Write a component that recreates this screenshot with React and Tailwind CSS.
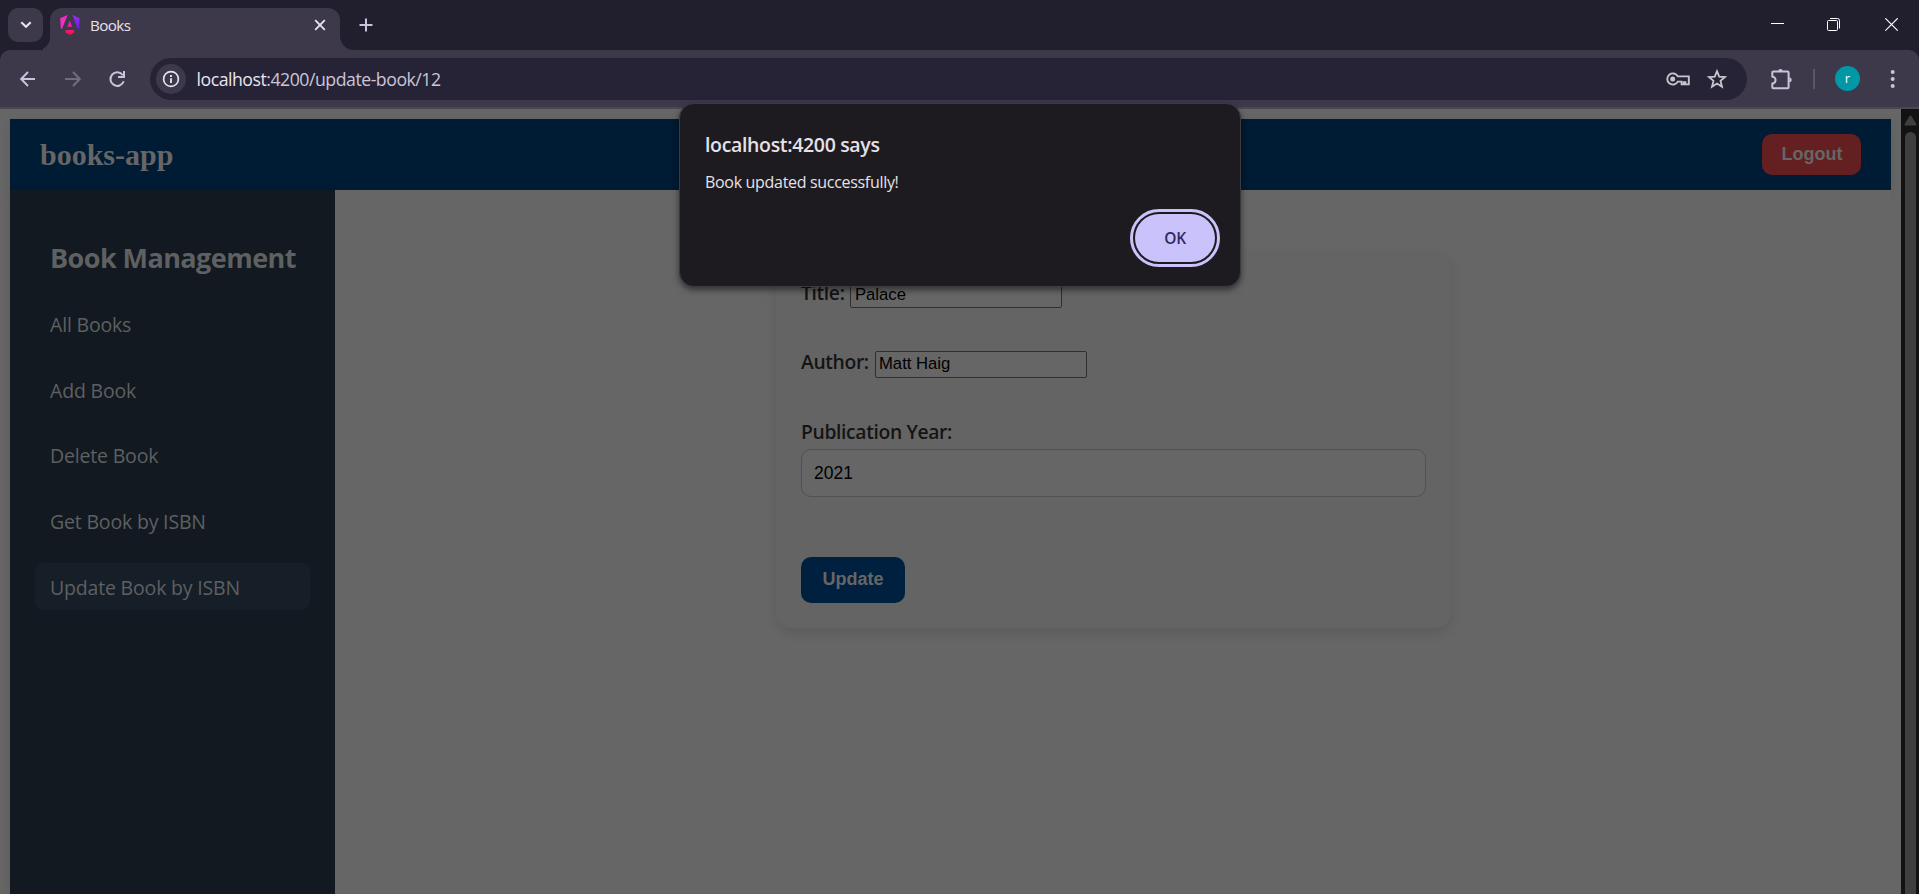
const NAV = ["All Books", "Add Book", "Delete Book", "Get Book by ISBN", "Update Book by ISBN"];
const ACTIVE = "Update Book by ISBN";

function AngularLogo() {
  return (
    <svg width="20" height="20" viewBox="0 0 20 20" className="shrink-0">
      <defs>
        <linearGradient id="left" x1="0" y1="0" x2="1" y2="1"><stop offset="0" stopColor="#f62ae0" /><stop offset="1" stopColor="#f0309a" /></linearGradient>
        <linearGradient id="right" x1="0" y1="0" x2="0" y2="1"><stop offset="0" stopColor="#9a2bf5" /><stop offset="1" stopColor="#6a1bf0" /></linearGradient>
        <linearGradient id="foot" x1="0" y1="0" x2="0" y2="1"><stop offset="0" stopColor="#f01a78" /><stop offset="1" stopColor="#ff0a3c" /></linearGradient>
      </defs>
      <path d="M0.2 3.2 7.6 0.1 2.3 13.3 0.9 13.9Z" fill="url(#left)" />
      <path d="M19.6 3.2 12.4 0.1 17.6 13.3 19 13.9Z" fill="url(#right)" />
      <path d="M9.8 5.6 12.2 11.8H7.3Z" fill="#e81fb0" />
      <path d="M6 15H13.8L14.6 17.2 9.9 20 5.1 17.2Z" fill="url(#foot)" />
    </svg>
  );
}

function TabStrip() {
  return (
    <div className="flex h-[50px] bg-[#211e2e]">
      <button className="ml-2 mt-2 flex h-[34px] w-[35px] items-center justify-center rounded-[10px] bg-[#3d394b]">
        <svg width="12" height="8" viewBox="0 0 12 8" fill="none" stroke="#e4e1f2" strokeWidth="2.2"><path d="M1.3 1.2 6 5.8 10.7 1.2" /></svg>
      </button>
      <div className="flex w-[7px] items-end">
        <svg width="7" height="14" viewBox="0 0 7 14"><path d="M7 0A13 13 0 0 1 0 12.5V14H7Z" fill="#3d394b" /></svg>
      </div>
      <div className="mt-2 flex h-[42px] w-[290px] items-start rounded-t-[12px] bg-[#3d394b] pl-[10px] pt-[7px]">
        <AngularLogo />
        <span className="ml-[10px] w-[216px] text-[15.2px] leading-[21px] tracking-[-0.6px] text-[#e6e1ec]">Books</span>
        <svg className="ml-2 mt-[4px]" width="12" height="12" viewBox="0 0 12 12" stroke="#e6e1ec" strokeWidth="1.9"><path d="M1.2 1.2 10.8 10.8M10.8 1.2 1.2 10.8" /></svg>
      </div>
      <div className="flex w-[14px] items-end">
        <svg width="14" height="14" viewBox="0 0 14 14"><path d="M0 0A14 14 0 0 0 14 14H0Z" fill="#3d394b" /></svg>
      </div>
      <svg className="ml-[5px] mt-[18px]" width="14" height="14" viewBox="0 0 14 14" stroke="#c9c3dc" strokeWidth="2"><path d="M7 0.5V13.5M0.5 7H13.5" /></svg>
      <div className="ml-auto flex">
        <svg className="mt-[17px]" width="14" height="14" viewBox="0 0 14 14"><path d="M0 6.5H13" stroke="#fff" /></svg>
        <svg className="ml-[42px] mt-[17px]" width="14" height="15" viewBox="0 0 14 15" fill="none" stroke="#fff"><rect x="0.5" y="3.5" width="10" height="10" rx="1" /><path d="M3 1.5H10.5Q12.5 1.5 12.5 3.5V11.5" /></svg>
        <svg className="ml-[44px] mr-[20px] mt-[18px]" width="14" height="14" viewBox="0 0 14 14" stroke="#fff" strokeWidth="1.2"><path d="M0.3 0.3 12.7 12.7M12.7 0.3 0.3 12.7" /></svg>
      </div>
    </div>
  );
}

function Toolbar() {
  return (
    <div className="bg-[#211e2e]">
      <div className="flex h-[57px] items-center rounded-t-[10px] bg-[#3d394b]">
        <svg className="ml-5" width="16" height="16" viewBox="0 0 16 16" fill="none" stroke="#c9c3dc" strokeWidth="1.9"><path d="M15 8H1.5M8 1 1.2 8 8 15" /></svg>
        <svg className="ml-[29px]" width="16" height="16" viewBox="0 0 16 16" fill="none" stroke="#716c82" strokeWidth="1.9"><path d="M0 8H14.5M8 1 14.8 8 8 15" /></svg>
        <svg className="ml-[27px]" width="18" height="18" viewBox="0 0 18 18" fill="none" stroke="#c9c3dc" strokeWidth="2"><path d="M15.7 11.2A6.8 6.8 0 1 1 14.8 5.2" /><path d="M16 1V7H10" /></svg>
        <div className="ml-[24px] flex h-[42px] w-[1597px] items-center rounded-full bg-[#272336]">
          <div className="ml-[6px] flex size-[30px] items-center justify-center rounded-full bg-[#3d394b]">
            <svg width="18" height="18" viewBox="0 0 18 18" fill="none" stroke="#e6e1ec" strokeWidth="1.7"><circle cx="9" cy="9" r="7.4" /><path d="M9 8.2V13" strokeWidth="1.9" /><path d="M9 5V6.9" strokeWidth="1.9" /></svg>
          </div>
          <span className="ml-[10.5px] mt-px whitespace-nowrap text-[17.7px] leading-[24px] tracking-[-0.48px] text-[#cbc6d6]"><span className="text-[#e9e5f0]">localhost</span>:4200/update-book/12</span>
          <svg className="ml-auto mt-px" width="24" height="14" viewBox="0 0 24 14" fill="none" stroke="#c9c5d0" strokeWidth="1.9"><path d="M11.8 4.4A5.6 5.6 0 1 0 11.8 9.6H15.6V12.4H17.8V10.2H19.4V12.4H22.8V4.4Z" /><circle cx="6.7" cy="7" r="2.5" fill="#c9c5d0" stroke="none" /></svg>
          <svg className="ml-[17px] mr-5" width="20" height="20" viewBox="0 0 20 20" fill="none" stroke="#c9c5d0" strokeWidth="1.8"><path d="M10 2.2 12.2 7.6 18 8 13.5 11.8 15 17.7 10 14.6 5 17.7 6.5 11.8 2 8 7.8 7.6Z" /></svg>
        </div>
        <svg className="ml-[23px]" width="23" height="22" viewBox="0 0 23 22" fill="none" stroke="#c9c3dc" strokeWidth="2"><path d="M3.3 3.5H17.6Q18.6 3.5 18.6 4.5V19.2Q18.6 20.2 17.6 20.2H3.3Q2.3 20.2 2.3 19.2V15.4A3.3 3.3 0 0 0 2.3 8.8V4.5Q2.3 3.5 3.3 3.5Z" strokeLinejoin="round" /><path d="M8.1 3.2A2.3 2.3 0 0 1 12.7 3.2ZM19.3 9.5A2.4 2.4 0 0 1 19.3 14.3Z" fill="#c9c3dc" stroke="none" /></svg>
        <div className="ml-[20px] h-5 w-[2px] bg-[#5a5569]" />
        <div className="ml-[20px] flex size-[25px] items-center justify-center rounded-full bg-[#0097a7] text-[13px] text-white">r</div>
        <svg className="ml-[30px]" width="6" height="20" viewBox="0 0 6 20" fill="#c9c3dc"><circle cx="2.7" cy="3" r="2" /><circle cx="2.7" cy="10" r="2" /><circle cx="2.7" cy="17" r="2" /></svg>
      </div>
      <div className="h-[2px] bg-[#4b484e]" />
    </div>
  );
}

function Field({ label, value, labelClass, valueClass }) {
  return (
    <div className="flex h-[27px] items-center">
      <span className={"text-[19.3px] font-semibold leading-[21px] tracking-[-0.35px] whitespace-nowrap text-[#141414] " + labelClass}>{label}</span>
      <div className={"flex h-[27px] w-[212px] items-center rounded-[2px] border border-[#2f2f2f] bg-[#666] font-['Liberation_Sans',sans-serif] text-[16.67px] text-black " + valueClass}>{value}</div>
    </div>
  );
}

export default function App() {
  return (
    <div className="relative flex h-[894px] w-[1919px] flex-col overflow-hidden bg-[#666] font-['Open_Sans',sans-serif]">
      <TabStrip />
      <Toolbar />
      <div className="flex min-h-0 flex-1">
        <div className="flex flex-1 flex-col px-[10px] pt-[10px]">
          <header className="flex h-[71px] items-center bg-[#001b34] px-[30px] shadow-[0_3px_10px_rgba(0,0,0,0.1)]">
            <span className="pt-px font-['Liberation_Serif',serif] text-[30px] font-bold leading-[32px] text-[#666]">books-app</span>
            <button className="ml-auto h-[41px] w-[99px] rounded-[10px] bg-[#641f20] pl-px font-['Liberation_Sans',sans-serif] text-[18px] font-bold text-[#666]">Logout</button>
          </header>
          <div className="flex flex-1">
            <aside className="w-[325px] bg-[#121920] px-[25px] pt-[49px] shadow-[0_3px_10px_rgba(0,0,0,0.1)]">
              <h2 className="pl-[15px] text-[27px] font-bold leading-[37px] tracking-[-0.56px] whitespace-nowrap text-[#5f6061]">Book Management</h2>
              <nav className="mt-[24px] flex flex-col gap-[18.7px]">
                {NAV.map((item) => (
                  <a key={item} className={"flex h-[47px] items-center whitespace-nowrap rounded-[8px] pl-[15px] pt-[3px] text-[19.5px] leading-[26px] tracking-[-0.18px] text-[#5e6061]" + (item === ACTIVE ? " bg-[#161e27]" : "")}>{item}</a>
                ))}
              </nav>
            </aside>
            <main className="relative flex-1 bg-[#666] pl-[441px] pt-[63px]">
              <form className="flex h-[375px] w-[675px] flex-col rounded-[15px] bg-[#646464] px-[25px] pt-[28px] shadow-[0_5px_12px_rgba(0,0,0,0.1)]">
                <Field label="Title:" value="Palace" labelClass="w-[49px] pb-[4px]" valueClass="pb-px pl-[4px]" />
                <div className="h-[43px]" />
                <Field label="Author:" value="Matt Haig" labelClass="w-[74px] pb-[6px]" valueClass="pb-[2px] pl-[3px]" />
                <label className="mt-[40px] text-[19.3px] font-semibold leading-[27px] tracking-[-0.35px] text-[#141414]">Publication Year:</label>
                <div className="mt-[4px] flex h-[48px] w-[625px] items-center rounded-[10px] border border-[#515151] bg-[#666] pl-[12px] font-['Liberation_Sans',sans-serif] text-[17.5px] text-black">2021</div>
                <button type="button" className="mt-[60px] h-[46px] w-[104px] rounded-[10px] bg-[#002040] pb-[2px] font-['Liberation_Sans',sans-serif] text-[18px] font-bold text-[#666]">Update</button>
              </form>
            </main>
          </div>
        </div>
        <div className="flex w-[18px] flex-col items-center bg-[#121212] pt-[6px]">
          <svg width="13" height="11" viewBox="0 0 13 11"><path d="M6.5 1.5 11.5 9.5H1.5Z" fill="#3f3f3f" stroke="#3f3f3f" strokeWidth="2" strokeLinejoin="round" /></svg>
          <div className="mt-[6px] w-[11px] flex-1 rounded-t-full bg-[#3f3f3f]" />
        </div>
      </div>
      <div role="dialog" className="absolute left-[679px] top-[103px] h-[184px] w-[562px] rounded-[15px] border border-[#3b3a40] bg-[#1d1b20] px-[25px] shadow-[0_3px_6px_rgba(0,0,0,0.5)]">
        <div className="mt-[27px] text-[19.5px] font-semibold leading-[28px] tracking-[-0.34px] text-[#e6e1e9]">localhost:4200 says</div>
        <div className="mt-[12px] text-[16px] leading-[22px] tracking-[-0.31px] text-[#e6e1e9]">Book updated successfully!</div>
        <div className="mt-[16px] flex justify-end">
          <button className="-mr-[5px] flex h-[58px] w-[90px] items-center justify-center rounded-[29px] border-[3px] border-[#cac3fb] p-[2px]">
            <span className="flex size-full items-center justify-center rounded-[24px] bg-[#cac3fb] pt-[2px] text-[15.5px] font-semibold tracking-[-0.3px] text-[#32295f]">OK</span>
          </button>
        </div>
      </div>
    </div>
  );
}
